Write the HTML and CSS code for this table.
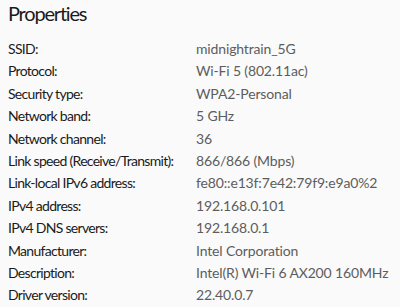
FILE: index.html
```html
<!DOCTYPE html>
<html>
<head>
<meta charset="utf-8">
<link rel="stylesheet" href="styles.css">
</head>
<body>
<div class="panel">
  <h1 class="title">Properties</h1>
  <dl class="props">
    <dt>SSID:</dt><dd>midnightrain_5G</dd>
    <dt>Protocol:</dt><dd>Wi-Fi 5 (802.11ac)</dd>
    <dt>Security type:</dt><dd>WPA2-Personal</dd>
    <dt>Network band:</dt><dd>5 GHz</dd>
    <dt>Network channel:</dt><dd>36</dd>
    <dt>Link speed (Receive/Transmit):</dt><dd>866/866 (Mbps)</dd>
    <dt>Link-local IPv6 address:</dt><dd>fe80::e13f:7e42:79f9:e9a0%2</dd>
    <dt>IPv4 address:</dt><dd>192.168.0.101</dd>
    <dt>IPv4 DNS servers:</dt><dd>192.168.0.1</dd>
    <dt>Manufacturer:</dt><dd>Intel Corporation</dd>
    <dt>Description:</dt><dd>Intel(R) Wi-Fi 6 AX200 160MHz</dd>
    <dt>Driver version:</dt><dd>22.40.0.7</dd>
  </dl>
</div>
</body>
</html>
```
FILE: styles.css
```css
html, body {
  margin: 0;
  padding: 0;
  background: #fafafa;
}
body {
  font-family: "Segoe UI", Lato, sans-serif;
  width: 400px;
  height: 307px;
  overflow: hidden;
}
.panel {
  padding: 0 8px;
}
.title {
  margin: 0;
  font-size: 20px;
  letter-spacing: -1.2px;
  font-weight: 400;
  line-height: 26px;
  color: #1b1b1b;
}
.props {
  margin: 12px 0 0;
  display: grid;
  grid-template-columns: 188px 1fr;
  font-size: 14px;
  line-height: 22.4px;
  white-space: nowrap;
}
.props dt {
  color: #1b1b1b;
  letter-spacing: -0.7px;
}
.props dd {
  margin: 0;
  color: #5d5d5d;
  letter-spacing: -0.15px;
}
```
